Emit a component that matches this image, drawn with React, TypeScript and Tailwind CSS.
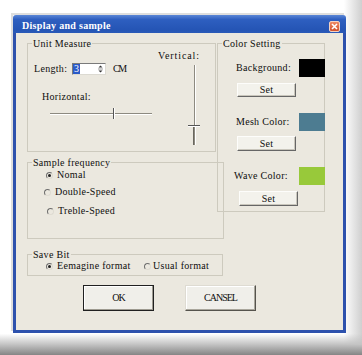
import React from "react";

function Radio({ checked = false }: { checked?: boolean }) {
  return (
    <span className="relative inline-block w-[7px] h-[7px] shrink-0 rounded-full border border-t-[#6d6d6d] border-l-[#6d6d6d] border-r-[#dedbd2] border-b-[#dedbd2]">
      {checked && (
        <span className="absolute left-[1px] top-[1px] w-[3px] h-[3px] rounded-full bg-[#222]" />
      )}
    </span>
  );
}

function Group({
  label,
  className = "",
  children,
}: {
  label: string;
  className?: string;
  children?: React.ReactNode;
}) {
  return (
    <div className={`relative border border-[#cdcabe] ${className}`}>
      <span className="absolute -top-[6px] left-[4px] bg-[#ebe8df] px-[1px] leading-[11px] whitespace-nowrap">
        {label}
      </span>
      {children}
    </div>
  );
}

function SetButton({ className = "" }: { className?: string }) {
  return (
    <div
      className={`flex items-center justify-center bg-[#f3f2ec] border border-t-[#fdfdfb] border-l-[#fdfdfb] border-r-[#666] border-b-[#666] shadow-[inset_-1px_-1px_0_#c9c6bc] ${className}`}
    >
      Set
    </div>
  );
}

export default function App() {
  return (
    <div className="w-[362px] h-[355px] pt-[15px] pl-[13px] pr-[16px] pb-[22px] bg-[linear-gradient(to_bottom,transparent_94%,#c4c4c4_97%,#858585_100%),linear-gradient(to_right,#ffffff_95%,#cfcfcf_100%)] [font-family:'Liberation_Serif',serif] text-[10px] leading-[10px] tracking-[0.3px] text-[#0e0e0e]">
      <div className="w-[333px] h-[318px] flex flex-col shadow-[-2px_-2px_0_#dedede]">
        {/* title bar */}
        <div className="h-[18px] shrink-0 rounded-t-[3px] bg-[linear-gradient(to_bottom,#5a86d6_0%,#2e5fc0_25%,#2555b5_80%,#2a5ab8_100%)] flex items-start justify-between pl-[9px] pr-[6px] pt-[6px]">
          <span className="text-white font-bold tracking-[0.3px]">Display and sample</span>
          <span className="w-[11px] h-[11px] rounded-[2px] border border-[#f3d2c4] bg-[linear-gradient(to_bottom,#ee8a64,#d2502c)] flex items-center justify-center">
            <svg width="7" height="7" viewBox="0 0 7 7">
              <path d="M1 1L6 6M6 1L1 6" stroke="#fff" strokeWidth="1.6" />
            </svg>
          </span>
        </div>
        {/* body */}
        <div className="flex-1 border-x-[3px] border-b-[3px] border-[#2d51ad] bg-[#ebe8df] pl-[11px] pt-[10px]">
          <div className="flex items-start">
            <div className="w-[189px] flex flex-col">
              {/* Unit Measure */}
              <Group label="Unit Measure" className="h-[109px] flex">
                <div className="w-[124px] flex flex-col pl-[6px]">
                  <div className="mt-[19px] flex items-center h-[12px]">
                    <span className="w-[38px]">Length:</span>
                    <div className="w-[34px] h-[12px] flex items-center bg-white border border-t-[#7a7a7a] border-l-[#7a7a7a] border-r-[#dcdad2] border-b-[#dcdad2]">
                      <span className="bg-[#2a5ac8] text-white h-[10px] px-[1px]">3</span>
                      <span className="flex-1" />
                      <svg width="7" height="10" viewBox="0 0 7 10" className="mr-[1px]">
                        <path d="M3.5 1.5L1.5 3.5H5.5Z" fill="#333" />
                        <path d="M1 5H6" stroke="#999" strokeWidth="1" />
                        <path d="M1.5 6.5H5.5L3.5 8.5Z" fill="#333" />
                      </svg>
                    </div>
                    <span className="ml-[7px] tracking-[-1.3px]">CM</span>
                  </div>
                  <span className="mt-[17px] ml-[8px]">Horizontal:</span>
                  <div className="relative mt-[6px] ml-[16px] w-[102px] h-[11px]">
                    <div className="absolute left-0 right-0 top-[5px] h-[2px] border-t border-t-[#8d8a80] border-b border-b-white" />
                    <div className="absolute left-[63px] top-0 w-[2px] h-[11px] border-l border-l-[#555] border-r border-r-white" />
                  </div>
                </div>
                <div className="flex flex-col pl-[6px]">
                  <span className="mt-[7px] tracking-[0.9px]">Vertical:</span>
                  <div className="relative mt-[4px] ml-[29px] w-[14px] h-[80px]">
                    <div className="absolute left-[7px] top-0 bottom-0 w-[2px] border-l border-l-[#8d8a80] border-r border-r-white" />
                    <div className="absolute left-[6px] top-[60px] bottom-0 w-[1px] bg-[#6a675f]" />
                    <div className="absolute left-[1px] top-[60px] w-[12px] h-[2px] border-t border-t-[#555] border-b border-b-white" />
                  </div>
                </div>
              </Group>

              {/* Sample frequency */}
              <Group label="Sample frequency" className="mt-[10px] h-[77px] w-[197px] flex flex-col pt-[7px]">
                <div className="flex items-center gap-[4px] ml-[18px]">
                  <Radio checked />
                  <span>Nomal</span>
                </div>
                <div className="flex items-center gap-[4px] ml-[16px] mt-[7px]">
                  <Radio />
                  <span>Double-Speed</span>
                </div>
                <div className="flex items-center gap-[4px] ml-[19px] mt-[9px]">
                  <Radio />
                  <span>Treble-Speed</span>
                </div>
              </Group>

              {/* Save Bit */}
              <Group label="Save Bit" className="mt-[15px] h-[22px] w-[196px] pt-[6px]">
                <div className="flex items-center ml-[18px]">
                  <div className="w-[98px] flex items-center gap-[4px]">
                    <Radio checked />
                    <span>Eemagine format</span>
                  </div>
                  <div className="flex items-center gap-[2px]">
                    <Radio />
                    <span>Usual format</span>
                  </div>
                </div>
              </Group>
            </div>

            {/* Color Setting */}
            <Group label="Color Setting" className="ml-[1px] w-[108px] h-[169px] flex flex-col pt-[15px]">
              <div className="flex items-center justify-between h-[18px] -mr-[1px]">
                <span className="pl-[18px]">Background:</span>
                <span className="w-[26px] h-[18px] bg-black" />
              </div>
              <SetButton className="ml-[19px] mt-[6px] w-[59px] h-[14px]" />

              <div className="flex items-center justify-between h-[18px] -mr-[1px] mt-[16px]">
                <span className="pl-[18px]">Mesh Color:</span>
                <span className="w-[26px] h-[18px] bg-[#4d7c91]" />
              </div>
              <SetButton className="ml-[19px] mt-[5px] w-[59px] h-[15px]" />

              <div className="flex items-center justify-between h-[18px] -mr-[1px] mt-[16px]">
                <span className="pl-[16px]">Wave Color:</span>
                <span className="w-[26px] h-[18px] bg-[#98c93a]" />
              </div>
              <SetButton className="ml-[21px] mt-[6px] w-[59px] h-[15px]" />
            </Group>
          </div>

          {/* buttons */}
          <div className="flex gap-[31px] ml-[56px] mt-[9px] tracking-[-1px]">
            <div className="w-[71px] h-[26px] flex items-center justify-center border border-[#202020] bg-[#f0efea] shadow-[inset_-1px_-1px_0_#9d9a90,inset_1px_1px_0_#fff]">
              OK
            </div>
            <div className="w-[71px] h-[26px] flex items-center justify-center border border-t-[#dedbd2] border-l-[#dedbd2] border-r-[#55534d] border-b-[#55534d] bg-[#f0efea] shadow-[inset_-1px_-1px_0_#a9a69c,inset_1px_1px_0_#fff]">
              CANSEL
            </div>
          </div>
        </div>
      </div>
    </div>
  );
}
